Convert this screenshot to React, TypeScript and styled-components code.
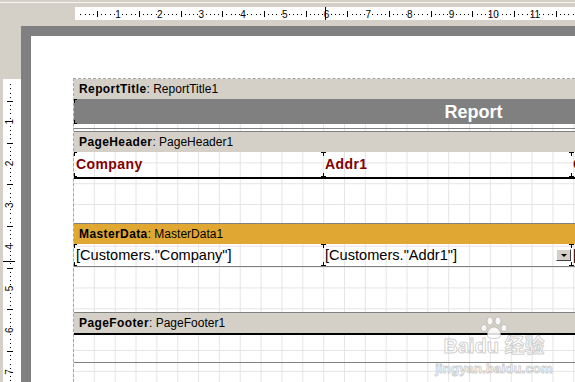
import styled, { createGlobalStyle } from "styled-components"

const GlobalStyle = createGlobalStyle`
  html, body {
    margin: 0;
    padding: 0;
    background: #d4d0c8;
    overflow: hidden;
  }
`

const UNIT = 41.7
const GRID = 20.85

const Window = styled.div`
  position: relative;
  width: 575px;
  height: 382px;
  overflow: hidden;
  display: flex;
  flex-direction: column;
  background: #d4d0c8;
  font-family: "Liberation Sans", Arial, sans-serif;
`

const TopBar = styled.div`
  margin-top: 2px;
  height: 24px;
  box-sizing: border-box;
  border-top: 1px solid #f6f5f2;
  padding: 4px 0 0 75px;
  flex-shrink: 0;
`

const HRulerStrip = styled.div`
  height: 13px;
  background: #fff;
`

const Main = styled.div`
  flex: 1;
  min-height: 0;
  display: flex;
`

const LeftBar = styled.div`
  width: 21px;
  flex-shrink: 0;
  box-sizing: border-box;
  padding: 53px 0 0 3px;
  display: flex;
`

const VRulerStrip = styled.div`
  width: 12px;
  flex: 1;
  background: #fff;
  overflow: hidden;
`

const Workspace = styled.div`
  flex: 1;
  min-width: 0;
  background: #808080;
  padding: 10px 0 0 10px;
  display: flex;
  overflow: hidden;
`

const Page = styled.div`
  flex: 1;
  min-width: 0;
  background: #fff;
  padding: 42px 0 0 42px;
  display: flex;
  flex-direction: column;
  align-items: flex-start;
  overflow: hidden;
`

const BandArea = styled.div`
  width: 900px;
  flex: 1;
  flex-shrink: 0;
  border-left: 1px dashed #a4a4a4;
  border-top: 1px dashed #a4a4a4;
  background-color: #fff;
  background-image: linear-gradient(to right, #e4e4e4 1px, transparent 1px),
    linear-gradient(to bottom, #e4e4e4 1px, transparent 1px);
  background-size: ${GRID}px ${GRID}px;
  background-position: -1px 0;
`

const Band = styled.section<{ $gap?: number }>`
  margin-top: ${(p) => p.$gap ?? 0}px;
`

const BandTitle = styled.div<{ $color?: string; $first?: boolean }>`
  height: ${(p) => (p.$first ? 20 : 21)}px;
  box-sizing: border-box;
  border-top: ${(p) => (p.$first ? "none" : "1px solid #808080")};
  background: ${(p) => p.$color ?? "#d4d0c8"};
  padding-left: 5px;
  font-size: 12px;
  line-height: 20px;
  color: #000;
  white-space: nowrap;

  b {
    letter-spacing: 0.4px;
  }
`

const BandBody = styled.div<{ $height: number; $top?: string; $bottom?: string }>`
  height: ${(p) => p.$height}px;
  border-top: ${(p) => p.$top ?? "none"};
  border-bottom: ${(p) => p.$bottom ?? "none"};
  display: flex;
  align-items: flex-start;
`

const Memo = styled.div<{ $width: number; $lead?: boolean; $height: number }>`
  position: relative;
  width: ${(p) => p.$width}px;
  height: ${(p) => p.$height}px;
  flex-shrink: 0;
  display: flex;
  align-items: center;
  padding-left: 2px;
  box-sizing: border-box;

  &::before,
  &::after {
    content: "";
    position: absolute;
    left: ${(p) => (p.$lead ? 0 : -2)}px;
    width: ${(p) => (p.$lead ? 3 : 5)}px;
    height: 4px;
  }
  &::before {
    top: 0;
    background: linear-gradient(#000, #000) top / 100% 1px no-repeat,
      linear-gradient(#000, #000) ${(p) => (p.$lead ? "left" : "center")} / 1px 100% no-repeat;
  }
  &::after {
    bottom: 0;
    background: linear-gradient(#000, #000) bottom / 100% 1px no-repeat,
      linear-gradient(#000, #000) ${(p) => (p.$lead ? "left" : "center")} / 1px 100% no-repeat;
  }
`

const ReportMemo = styled(Memo)`
  justify-content: center;
  background: #808080;
  color: #fff;
  font-weight: bold;
  font-size: 18px;
  padding-top: 2px;
`

const HeadCaption = styled.span`
  color: #800000;
  font-weight: bold;
  font-size: 14px;
  letter-spacing: 0.4px;
  margin-top: -2px;
  white-space: nowrap;
`

const FieldText = styled.span`
  font-size: 14.6px;
  color: #000;
  white-space: nowrap;
`

const DropButton = styled.span`
  margin-left: auto;
  width: 15px;
  height: 12px;
  box-sizing: border-box;
  background: #d4d0c8;
  border: 1px solid;
  border-color: #ffffff #404040 #404040 #ffffff;
  display: flex;
  align-items: center;
  justify-content: center;

  &::after {
    content: "";
    border-left: 3px solid transparent;
    border-right: 3px solid transparent;
    border-top: 3px solid #000;
  }
`

const Watermark = styled.div`
  position: absolute;
  left: 442px;
  top: 316px;
  width: 104px;
  display: flex;
  flex-direction: column;
  align-items: center;
  color: rgba(255, 255, 255, 0.85);
  -webkit-text-stroke: 1px rgba(150, 150, 150, 0.45);
  pointer-events: none;
`

const MarkLine = styled.div`
  display: flex;
  align-items: center;
  font-weight: bold;
  font-size: 20px;
  line-height: 18px;
  margin-top: -3px;
  font-family: "Liberation Sans", "Noto Sans CJK SC", sans-serif;
`

const MarkSite = styled.div`
  font-size: 13px;
  font-weight: bold;
  margin-top: 6px;
  letter-spacing: 0.2px;
`

function HRuler() {
  const items = []
  const origin = 1.3
  for (let n = 0; n < 12; n++) {
    for (let i = 0; i < 10; i++) {
      const x = origin + n * UNIT + (i * UNIT) / 10
      if (i === 0) {
        if (n > 0)
          items.push(
            <text key={`t${n}`} x={x} y={10.5} fontSize="10" textAnchor="middle" fill="#000"
              fontFamily="Liberation Sans, Arial, sans-serif">{n}</text>
          )
      } else if (i === 5) {
        items.push(<rect key={`h${n}`} x={Math.round(x)} y={4} width={1} height={6} fill="#000" />)
      } else {
        items.push(<rect key={`d${n}-${i}`} x={Math.round(x)} y={7} width={1} height={1} fill="#000" />)
      }
    }
  }
  return (
    <svg width="500" height="13" style={{ display: "block" }}>
      {items}
      <rect x={250} y={0} width={1} height={13} fill="#000" />
    </svg>
  )
}

function VRuler() {
  const items = []
  const origin = 1
  for (let n = 0; n < 8; n++) {
    for (let i = 0; i < 10; i++) {
      const y = origin + n * UNIT + (i * UNIT) / 10
      if (i === 0) {
        if (n > 0)
          items.push(
            <text key={`t${n}`} x={0} y={0} fontSize="10" textAnchor="middle" fill="#000"
              transform={`translate(10.3 ${y}) rotate(-90)`}
              fontFamily="Liberation Sans, Arial, sans-serif">{n}</text>
          )
      } else if (i === 5) {
        items.push(<rect key={`h${n}`} x={4} y={Math.round(y)} width={6} height={1} fill="#000" />)
      } else {
        items.push(<rect key={`d${n}-${i}`} x={7} y={Math.round(y)} width={1} height={1} fill="#000" />)
      }
    }
  }
  return (
    <svg width="12" height="310" style={{ display: "block" }}>
      {items}
      <rect x={0} y={182} width={12} height={1} fill="#000" />
    </svg>
  )
}

function Paw() {
  return (
    <svg width="30" height="24" viewBox="0 0 30 24" fill="rgba(255,255,255,0.85)"
      stroke="rgba(150,150,150,0.45)" strokeWidth="1">
      <ellipse cx="11" cy="5" rx="3" ry="4" />
      <ellipse cx="19" cy="5" rx="3" ry="4" />
      <ellipse cx="5" cy="12" rx="3" ry="3.5" />
      <ellipse cx="25" cy="12" rx="3" ry="3.5" />
      <path d="M15 11 C10 11 7 18 9 21 C11 23 19 23 21 21 C23 18 20 11 15 11 Z" />
    </svg>
  )
}

function App() {
  return (
    <Window>
      <GlobalStyle />
      <TopBar>
        <HRulerStrip>
          <HRuler />
        </HRulerStrip>
      </TopBar>
      <Main>
        <LeftBar>
          <VRulerStrip>
            <VRuler />
          </VRulerStrip>
        </LeftBar>
        <Workspace>
          <Page>
            <BandArea>
              <Band>
                <BandTitle $first>
                  <b>ReportTitle</b>: ReportTitle1
                </BandTitle>
                <BandBody $height={29} $bottom="1px solid #808080">
                  <ReportMemo $width={797} $height={25} $lead>Report</ReportMemo>
                </BandBody>
              </Band>

              <Band $gap={2}>
                <BandTitle>
                  <b>PageHeader</b>: PageHeader1
                </BandTitle>
                <BandBody $height={25} $bottom="2px solid #000">
                  <Memo $width={249} $height={25} $lead>
                    <HeadCaption>Company</HeadCaption>
                  </Memo>
                  <Memo $width={248} $height={25}>
                    <HeadCaption>Addr1</HeadCaption>
                  </Memo>
                  <Memo $width={249} $height={25}>
                    <HeadCaption>City</HeadCaption>
                  </Memo>
                </BandBody>
              </Band>

              <Band $gap={44}>
                <BandTitle $color="#e0a832">
                  <b>MasterData</b>: MasterData1
                </BandTitle>
                <BandBody $height={22} $bottom="1px solid #808080">
                  <Memo $width={249} $height={22} $lead>
                    <FieldText>[Customers."Company"]</FieldText>
                  </Memo>
                  <Memo $width={248} $height={22}>
                    <FieldText>[Customers."Addr1"]</FieldText>
                    <DropButton />
                  </Memo>
                  <Memo $width={249} $height={22}>
                    <FieldText>[Customers."City"]</FieldText>
                  </Memo>
                </BandBody>
              </Band>

              <Band $gap={45}>
                <BandTitle>
                  <b>PageFooter</b>: PageFooter1
                </BandTitle>
                <BandBody $height={27} $top="2px solid #000" $bottom="1px solid #808080" />
              </Band>
            </BandArea>
          </Page>
        </Workspace>
      </Main>
      <Watermark>
        <Paw />
        <MarkLine>Baidu 经验</MarkLine>
        <MarkSite>jingyan.baidu.com</MarkSite>
      </Watermark>
    </Window>
  )
}

export default App
